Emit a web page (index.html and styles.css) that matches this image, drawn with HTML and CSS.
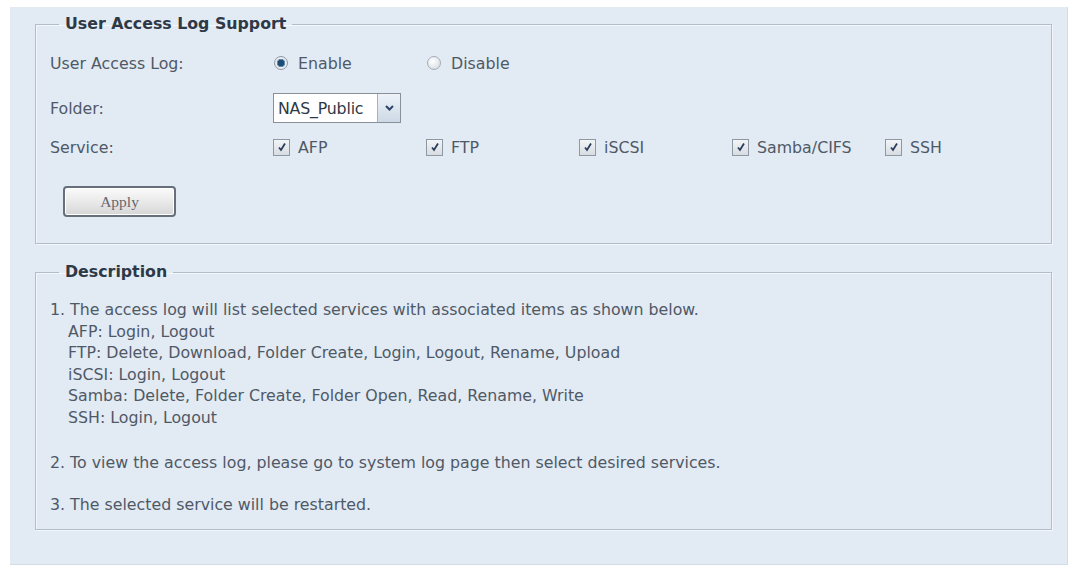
FILE: index.html
```html
<!DOCTYPE html>
<html>
<head>
<meta charset="utf-8">
<link rel="stylesheet" href="styles.css">
</head>
<body>
<div class="panel">
  <fieldset class="box box-settings">
    <legend class="legend">User Access Log Support</legend>
    <div class="grid">
      <div class="label row1">User Access Log:</div>
      <div class="opt row1"><span class="radio on"></span><span>Enable</span></div>
      <div class="opt row1"><span class="radio"></span><span>Disable</span></div>
      <div class="fill row1"></div>

      <div class="label row2">Folder:</div>
      <div class="opt row2 span-all">
        <div class="select"><span class="select-text">NAS_Public</span><span class="select-btn"><svg width="11" height="8" viewBox="0 0 11 8"><path d="M2 2 L5.5 5.5 L9 2" fill="none" stroke="#2b4566" stroke-width="2"/></svg></span></div>
      </div>

      <div class="label row3">Service:</div>
      <div class="opt row3"><span class="check"><svg width="10" height="10" viewBox="0 0 10 10"><path d="M2 5.5 L4 8 L8 1.5" fill="none" stroke="#2a3d5c" stroke-width="1.8"/></svg></span><span>AFP</span></div>
      <div class="opt row3"><span class="check"><svg width="10" height="10" viewBox="0 0 10 10"><path d="M2 5.5 L4 8 L8 1.5" fill="none" stroke="#2a3d5c" stroke-width="1.8"/></svg></span><span>FTP</span></div>
      <div class="opt row3"><span class="check"><svg width="10" height="10" viewBox="0 0 10 10"><path d="M2 5.5 L4 8 L8 1.5" fill="none" stroke="#2a3d5c" stroke-width="1.8"/></svg></span><span>iSCSI</span></div>
      <div class="opt row3"><span class="check"><svg width="10" height="10" viewBox="0 0 10 10"><path d="M2 5.5 L4 8 L8 1.5" fill="none" stroke="#2a3d5c" stroke-width="1.8"/></svg></span><span>Samba/CIFS</span></div>
      <div class="opt row3"><span class="check"><svg width="10" height="10" viewBox="0 0 10 10"><path d="M2 5.5 L4 8 L8 1.5" fill="none" stroke="#2a3d5c" stroke-width="1.8"/></svg></span><span>SSH</span></div>
    </div>
    <div class="actions"><button class="btn">Apply</button></div>
  </fieldset>

  <fieldset class="box box-desc">
    <legend class="legend">Description</legend>
    <div class="desc">
      <p class="para">1. The access log will list selected services with associated items as shown below.<br>
      <span class="ind">AFP: Login, Logout</span><br>
      <span class="ind">FTP: Delete, Download, Folder Create, Login, Logout, Rename, Upload</span><br>
      <span class="ind">iSCSI: Login, Logout</span><br>
      <span class="ind">Samba: Delete, Folder Create, Folder Open, Read, Rename, Write</span><br>
      <span class="ind">SSH: Login, Logout</span></p>
      <p class="para p2">2. To view the access log, please go to system log page then select desired services.</p>
      <p class="para p3">3. The selected service will be restarted.</p>
    </div>
  </fieldset>
</div>
</body>
</html>
```
FILE: styles.css
```css
html, body {
  margin: 0;
  padding: 0;
  background: #ffffff;
}
body {
  font-family: "DejaVu Sans", Tahoma, sans-serif;
  font-size: 15.8px;
  color: #4f5966;
}
.panel {
  margin: 7px 0 0 10px;
  width: 1058px;
  height: 558px;
  box-sizing: border-box;
  padding: 7px 15px 0 25px;
  background: #e2eaf4;
  border-right: 1px solid #d3dce7;
  border-bottom: 1px solid #d3dce7;
}
.box {
  margin: 0;
  padding: 0;
  border: 1px solid #b3bdc8;
  box-shadow: 1px 1px 0 #f3f7fb, inset 1px 1px 0 #f3f7fb;
  min-width: 0;
}
.legend {
  margin-left: 23px;
  padding: 0 6px;
  font-weight: bold;
  font-size: 15.8px;
  line-height: 20px;
  color: #2e3947;
}
.box-settings {
  height: 230px;
  box-sizing: border-box;
}
.grid {
  display: grid;
  grid-template-columns: 223px 153px 153px 153px 153px auto;
  padding: 14px 0 0 14px;
}
.label, .opt {
  display: flex;
  align-items: center;
  height: 30px;
  white-space: nowrap;
}
.row2 { margin-top: 15px; }
.row3 { margin-top: 9px; }
.fill { grid-column: span 3; }
.span-all { grid-column: span 5; }
.opt { gap: 10px; }
.radio {
  width: 14px;
  height: 14px;
  border-radius: 50%;
  box-sizing: border-box;
  border: 1px solid #a5adb6;
  background: radial-gradient(circle at 40% 35%, #ffffff 0%, #e3e6ea 60%, #c9ced4 100%);
  margin-left: 1px;
}
.radio.on {
  background: radial-gradient(circle, #1f4c73 0 3px, #5f88ad 3.5px 4px, #e8edf2 4.5px);
  border-color: #8e99a5;
}
.opt .check + span { margin-left: -2px; }
.check {
  width: 17px;
  height: 17px;
  box-sizing: border-box;
  border: 1px solid #8e98a3;
  background: linear-gradient(#f2f4f6, #d8dde2);
  display: flex;
  align-items: center;
  justify-content: center;
}
.select {
  display: flex;
  height: 30px;
  box-sizing: border-box;
  border: 1px solid #86919c;
  background: #ffffff;
}
.select-text {
  width: 104px;
  display: flex;
  align-items: center;
  padding-left: 4px;
  box-sizing: border-box;
  color: #2f3945;
  letter-spacing: -0.2px;
  border-right: 1px solid #a8b2bd;
}
.select-btn {
  width: 22px;
  display: flex;
  align-items: center;
  justify-content: center;
  background: linear-gradient(#eef3f8, #cdd9e6);
}
.actions {
  padding: 24px 0 0 27px;
}
.btn {
  width: 113px;
  height: 31px;
  box-sizing: border-box;
  border: 2px solid #67707a;
  border-radius: 4px;
  background: linear-gradient(#fbfbfb, #e6e6e6 60%, #d6d6d6);
  font-family: "Liberation Serif", serif;
  font-size: 15.5px;
  color: #67676f;
  padding: 0;
  box-shadow: inset 0 0 0 1px #ffffff;
}
.box-desc {
  margin-top: 18px;
  height: 268px;
  box-sizing: border-box;
}
.desc {
  padding: 17px 0 0 14px;
  line-height: 21.5px;
}
.para { margin: 0; }
.ind { padding-left: 18px; }
.p2 { margin-top: 24px; }
.p3 { margin-top: 20.5px; }
```
